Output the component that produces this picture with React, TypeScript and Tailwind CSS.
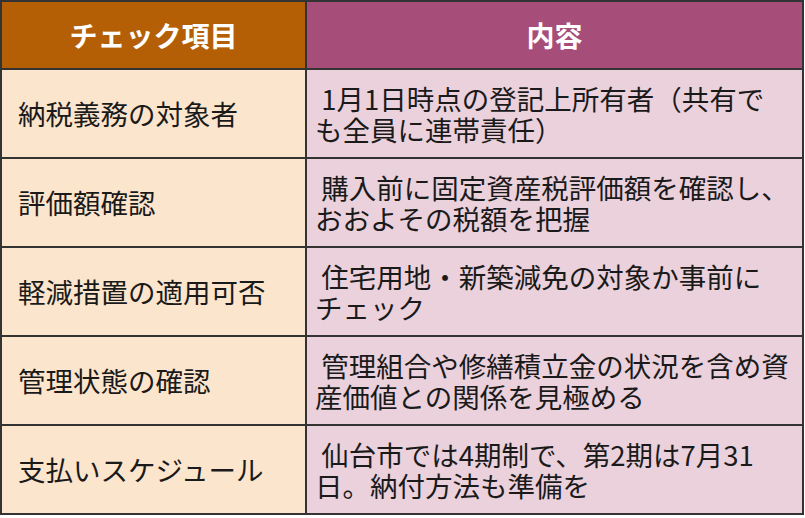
import React from "react";

const rows: { item: string; lines: string[] }[] = [
  { item: "納税義務の対象者", lines: [" 1月1日時点の登記上所有者（共有で", "も全員に連帯責任）"] },
  { item: "評価額確認", lines: [" 購入前に固定資産税評価額を確認し、", "おおよその税額を把握"] },
  { item: "軽減措置の適用可否", lines: [" 住宅用地・新築減免の対象か事前に", "チェック"] },
  { item: "管理状態の確認", lines: [" 管理組合や修繕積立金の状況を含め資", "産価値との関係を見極める"] },
  { item: "支払いスケジュール", lines: [" 仙台市では4期制で、第2期は7月31", "日。納付方法も準備を"] },
];

export default function App() {
  return (
    <div
      className="w-[805px] h-[518px] bg-white"
      style={{ fontFamily: '"Noto Sans CJK JP", "Noto Sans", sans-serif' }}
    >
      <table className="w-[804px] border-collapse border-2 border-[#333] text-[#1a1a1a]">
        <thead>
          <tr className="h-[68px]">
            <th className="w-[305px] border-2 border-[#333] bg-[#b45f06] text-white text-[28px] font-bold leading-none">
              チェック項目
            </th>
            <th className="border-2 border-[#333] bg-[#a64d79] text-white text-[28px] font-bold leading-none">
              内容
            </th>
          </tr>
        </thead>
        <tbody>
          {rows.map((r) => (
            <tr key={r.item} className="h-[89px]">
              <td className="border-2 border-[#333] bg-[#fce5cd] pl-[16px] text-[27.5px] leading-[31px] align-middle whitespace-nowrap">
                {r.item}
              </td>
              <td className="border-2 border-[#333] bg-[#ead1dc] pl-[8px] text-[27.5px] leading-[31px] align-middle">
                {r.lines.map((l, i) => (
                  <div key={i} className="whitespace-pre">
                    {l}
                  </div>
                ))}
              </td>
            </tr>
          ))}
        </tbody>
      </table>
    </div>
  );
}
